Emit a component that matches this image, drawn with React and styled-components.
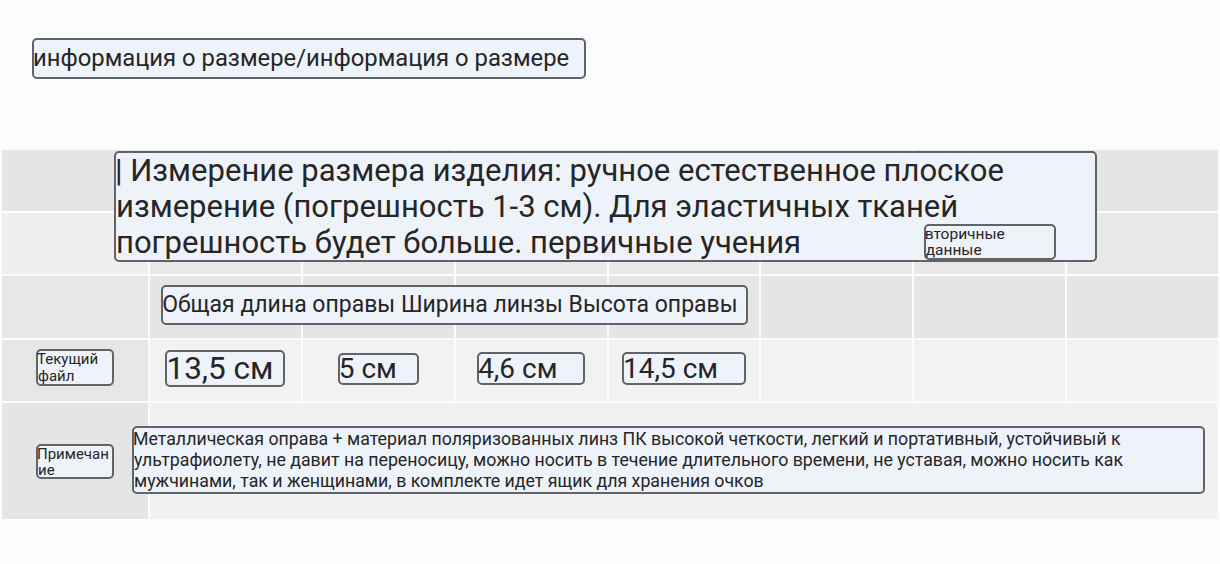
import React from "react";
import styled, { createGlobalStyle } from "styled-components";

const GlobalStyle = createGlobalStyle`
  html, body {
    margin: 0;
    padding: 0;
    background: #fcfcfc;
  }
  body {
    font-family: Roboto, "Noto Sans", "Liberation Sans", sans-serif;
    color: #262626;
  }
  * {
    box-sizing: border-box;
  }
`;

// tones per row: first entry is the label column, second the data columns
const ROWS = [
  { tone: ["#e5e5e5", "#e5e5e5"] },
  { tone: ["#efefef", "#e8e8e8"] },
  { tone: ["#e6e6e6", "#e5e5e5"] },
  { tone: ["#e6e6e6", "#f2f2f2"] },
];

const VALUES = [
  { text: "13,5 см", w: 120, h: 37, size: 31.5 },
  { text: "5 см", w: 81, h: 32, size: 28 },
  { text: "4,6 см", w: 108, h: 33, size: 28 },
  { text: "14,5 см", w: 124, h: 33, size: 28 },
];

function App() {
  return (
    <>
      <GlobalStyle />
      <Page>
        <TitleArea>
          <Note $w={554} $h={41} $size={23.8} $lh={37} $nowrap>
            информация о размере/информация о размере
          </Note>
        </TitleArea>

        <Table>
          {ROWS.map((row, r) =>
            Array.from({ length: 8 }).map((_, c) => (
              <Cell
                key={`${r}-${c}`}
                $bg={c === 0 ? row.tone[0] : row.tone[1]}
                style={{ gridRow: r + 1, gridColumn: c + 1 }}
              />
            ))
          )}
          <Cell $bg="#e5e5e5" style={{ gridRow: 5, gridColumn: 1 }} />
          <Cell $bg="#f1f1f1" style={{ gridRow: 5, gridColumn: "2 / -1" }} />

          <Lead>
            <Note $w={983} $h={111} $size={31} $lh={36} $nowrap>
              | Измерение размера изделия: ручное естественное плоское
              <br />
              измерение (погрешность 1-3 см). Для эластичных тканей
              <br />
              погрешность будет больше. первичные учения
            </Note>
          </Lead>

          <Slot $row="2" $col="7" $shift={-3}>
            <Note $w={132} $h={36} $size={15.5} $lh={16}>
              вторичные данные
            </Note>
          </Slot>

          <Slot $row="3" $col="2 / 6" $shift={-5}>
            <Note $w={587} $h={40} $size={23} $lh={36} $nowrap>
              Общая длина оправы Ширина линзы Высота оправы
            </Note>
          </Slot>

          <Slot $row="4" $col="1" $shift={-6}>
            <Note $w={78} $h={37} $size={15} $lh={17}>
              Текущий файл
            </Note>
          </Slot>

          {VALUES.map((v, i) => (
            <Slot key={v.text} $row="4" $col={String(i + 2)} $shift={-4}>
              <Note $w={v.w} $h={v.h} $size={v.size} $lh={v.h - 4} $nowrap>
                {v.text}
              </Note>
            </Slot>
          ))}

          <Slot $row="5" $col="1">
            <Note $w={78} $h={35} $size={15} $lh={16} $breakAll>
              Примечание
            </Note>
          </Slot>

          <Remarks>
            <Note $w={1073} $h={68} $size={17.75} $lh={21} $nowrap $top={1}>
              Металлическая оправа + материал поляризованных линз ПК высокой
              четкости, легкий и портативный, устойчивый к
              <br />
              ультрафиолету, не давит на переносицу, можно носить в течение
              длительного времени, не уставая, можно носить как
              <br />
              мужчинами, так и женщинами, в комплекте идет ящик для хранения
              очков
            </Note>
          </Remarks>
        </Table>
      </Page>
    </>
  );
}

export default App;

const Page = styled.div`
  width: 1220px;
  height: 564px;
  overflow: hidden;
  background: #fcfcfc;
`;

const TitleArea = styled.div`
  height: 150px;
  padding: 38px 0 0 32px;
`;

const Table = styled.div`
  display: grid;
  width: 1216px;
  margin-left: 2px;
  grid-template-columns: 146px repeat(7, 1fr);
  grid-template-rows: 61px 61px 62px 61px 116px;
  gap: 2px;
`;

const Cell = styled.div`
  background: ${(p) => p.$bg};
`;

const Slot = styled.div`
  grid-row: ${(p) => p.$row};
  grid-column: ${(p) => p.$col};
  display: flex;
  align-items: center;
  justify-content: center;
  margin-top: ${(p) => p.$shift || 0}px;
`;

const Lead = styled.div`
  grid-row: 1 / 3;
  grid-column: 1 / -1;
  align-self: start;
  padding: 1px 0 0 112px;
`;

const Remarks = styled.div`
  grid-row: 5;
  grid-column: 1 / -1;
  align-self: center;
  padding: 0 0 2px 130px;
`;

const Note = styled.div`
  width: ${(p) => p.$w}px;
  height: ${(p) => p.$h}px;
  background: #eef2f9;
  border: 2px solid #606368;
  border-radius: 5px;
  padding: ${(p) => p.$top || 0}px 0 0;
  text-indent: -1px;
  font-size: ${(p) => p.$size}px;
  line-height: ${(p) => p.$lh}px;
  color: #262626;
  white-space: ${(p) => (p.$nowrap ? "nowrap" : "normal")};
  word-break: ${(p) => (p.$breakAll ? "break-all" : "normal")};
`;
